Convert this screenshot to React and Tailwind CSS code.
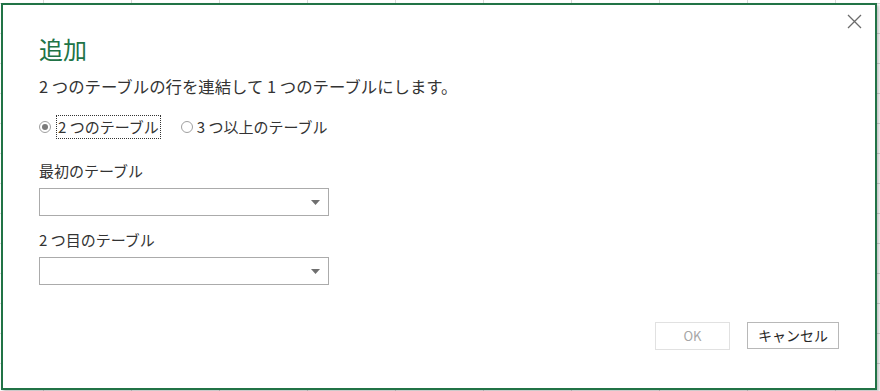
import React from "react";

const font = { fontFamily: '"Noto Sans CJK JP", "Noto Sans", sans-serif' };

function Select() {
  return (
    <div className="relative h-[28px] w-[290px] border border-[#ababab] bg-white">
      <svg className="absolute right-[8px] top-[11px]" width="9" height="5" viewBox="0 0 9 5">
        <path d="M0 0 L9 0 L4.5 5 Z" fill="#6f6f6f" />
      </svg>
    </div>
  );
}

export default function App() {
  return (
    <div
      className="relative h-[391px] w-[880px] overflow-hidden bg-white bg-[linear-gradient(to_right,#d9d9d9_1px,transparent_1px),linear-gradient(to_bottom,#d9d9d9_1px,transparent_1px)] bg-[size:88px_30px] bg-[position:43px_3px]"
      style={font}
    >
      <div className="absolute left-[1px] top-[3px] flex h-[387px] w-[876px] flex-col border-2 border-[#217346] bg-white pl-[36px] pr-[36px] shadow-[2px_2px_3px_rgba(0,0,0,0.25)]">
        <button className="absolute right-[12px] top-[7px] flex h-[18px] w-[18px] items-center justify-center">
          <svg width="15" height="15" viewBox="0 0 15 15">
            <path d="M1 1 L14 14 M14 1 L1 14" stroke="#6b6b6b" strokeWidth="1.3" />
          </svg>
        </button>
        <h1 className="mt-[27px] text-[24px] leading-[34px] font-normal text-[#217346]">追加</h1>
        <p className="mt-[9px] text-[16.4px] leading-[22px] text-[#333333]">
          2 つのテーブルの行を連結して 1 つのテーブルにします。
        </p>
        <div className="mt-[18px] flex items-center text-[15px] leading-[20px] text-[#333333]">
          <span className="flex h-[12px] w-[12px] items-center justify-center rounded-full border border-[#a0a0a0] bg-white">
            <span className="h-[6px] w-[6px] rounded-full bg-[#7a7a7a]" />
          </span>
          <span className="ml-[5px] border border-dotted border-[#333] px-[1px] py-[1px]">2 つのテーブル</span>
          <span className="ml-[20px] h-[12px] w-[12px] rounded-full border border-[#a0a0a0] bg-white" />
          <span className="ml-[4px]">3 つ以上のテーブル</span>
        </div>
        <label className="mt-[21px] text-[15px] leading-[22px] text-[#333333]">最初のテーブル</label>
        <div className="mt-[6px]"><Select /></div>
        <label className="mt-[13px] text-[15px] leading-[22px] text-[#333333]">2 つ目のテーブル</label>
        <div className="mt-[6px]"><Select /></div>
        <div className="mt-[37px] flex justify-end gap-[17px] pr-[0px]">
          <button className="h-[28px] w-[75px] border border-[#e1e1e1] bg-white text-[13px] text-[#a6a6a6]">OK</button>
          <button className="h-[27px] w-[92px] border border-[#b8b8b8] bg-white text-[14px] text-[#262626]">キャンセル</button>
        </div>
      </div>
    </div>
  );
}
